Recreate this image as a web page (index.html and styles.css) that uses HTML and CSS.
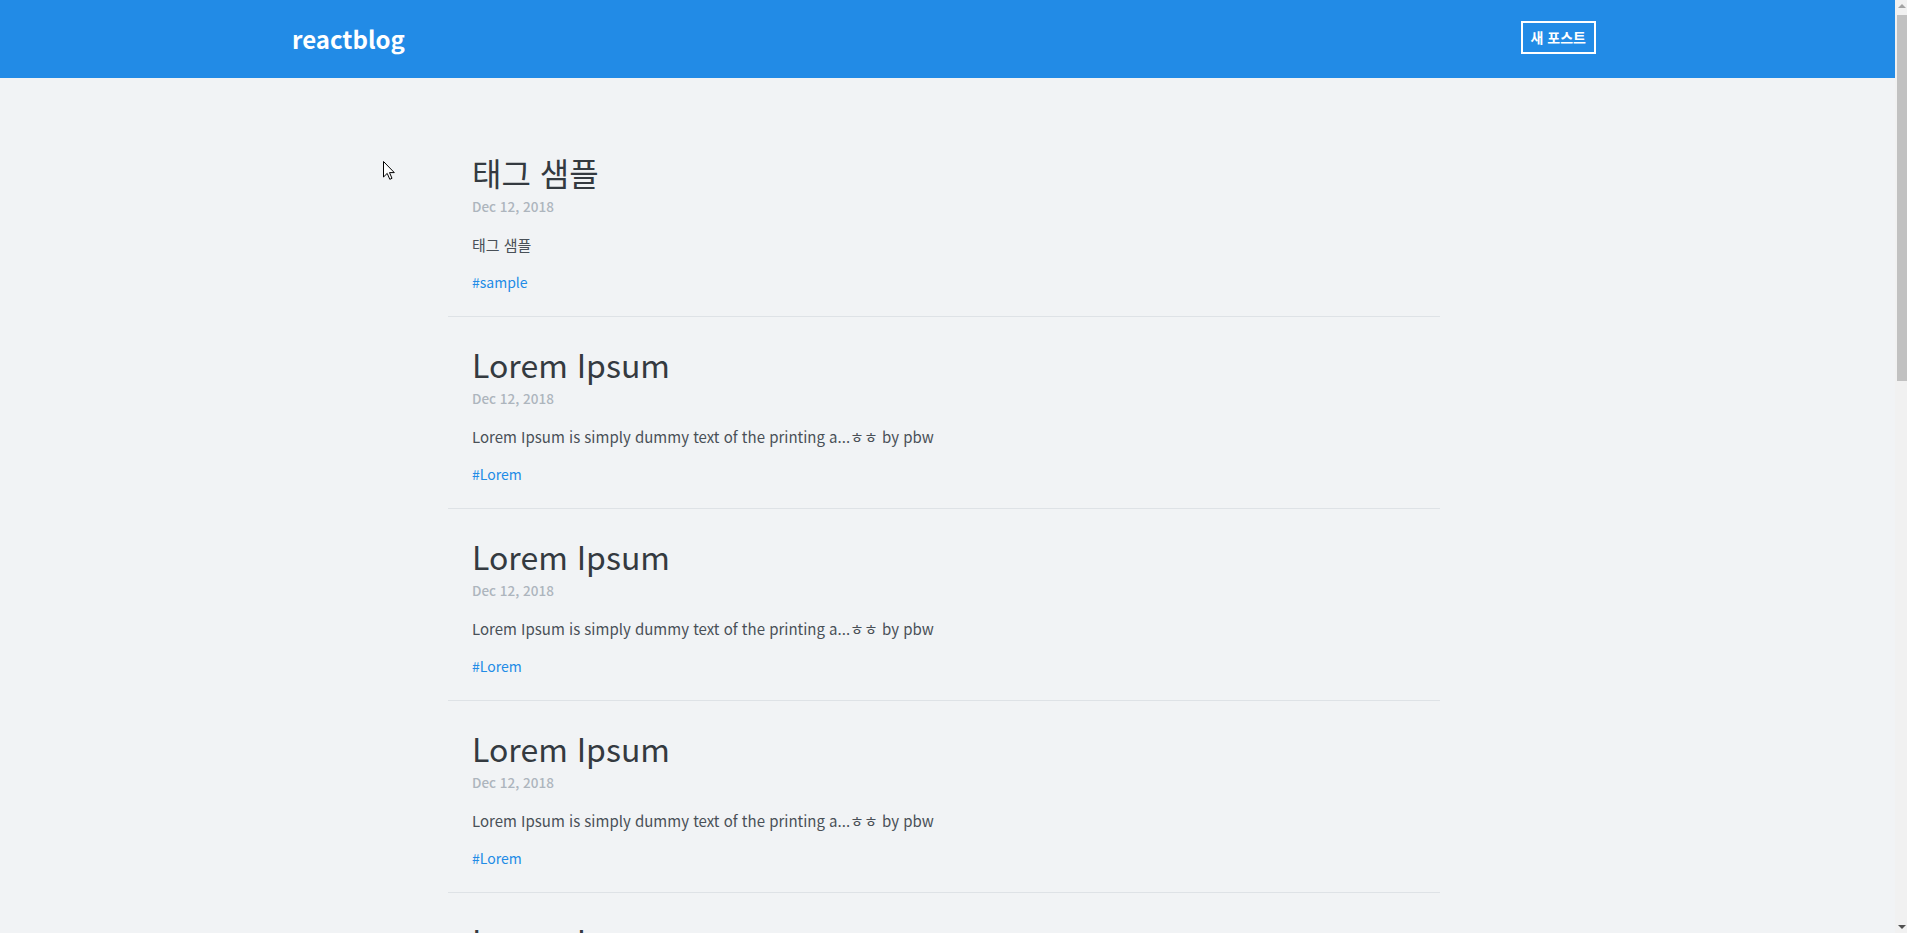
FILE: index.html
```html
<!DOCTYPE html>
<html lang="ko">
<head>
<meta charset="utf-8">
<title>reactblog</title>
<link rel="stylesheet" href="styles.css">
</head>
<body>
<header class="header">
  <div class="header-inner">
    <a class="logo" href="#">reactblog</a>
    <a class="btn-new" href="#">새 포스트</a>
  </div>
</header>
<main class="page">
  <div class="post-list">
    <article class="post-item">
      <h2 class="post-title">태그 샘플</h2>
      <div class="post-date">Dec 12, 2018</div>
      <p class="post-body">태그 샘플</p>
      <div class="post-tags"><a href="#">#sample</a></div>
    </article>
    <article class="post-item">
      <h2 class="post-title">Lorem Ipsum</h2>
      <div class="post-date">Dec 12, 2018</div>
      <p class="post-body">Lorem Ipsum is simply dummy text of the printing a...ㅎㅎ by pbw</p>
      <div class="post-tags"><a href="#">#Lorem</a></div>
    </article>
    <article class="post-item">
      <h2 class="post-title">Lorem Ipsum</h2>
      <div class="post-date">Dec 12, 2018</div>
      <p class="post-body">Lorem Ipsum is simply dummy text of the printing a...ㅎㅎ by pbw</p>
      <div class="post-tags"><a href="#">#Lorem</a></div>
    </article>
    <article class="post-item">
      <h2 class="post-title">Lorem Ipsum</h2>
      <div class="post-date">Dec 12, 2018</div>
      <p class="post-body">Lorem Ipsum is simply dummy text of the printing a...ㅎㅎ by pbw</p>
      <div class="post-tags"><a href="#">#Lorem</a></div>
    </article>
    <article class="post-item">
      <h2 class="post-title">Lorem Ipsum</h2>
      <div class="post-date">Dec 12, 2018</div>
      <p class="post-body">Lorem Ipsum is simply dummy text of the printing a...ㅎㅎ by pbw</p>
      <div class="post-tags"><a href="#">#Lorem</a></div>
    </article>
    <article class="post-item">
      <h2 class="post-title">Lorem Ipsum</h2>
      <div class="post-date">Dec 12, 2018</div>
      <p class="post-body">Lorem Ipsum is simply dummy text of the printing a...ㅎㅎ by pbw</p>
      <div class="post-tags"><a href="#">#Lorem</a></div>
    </article>
  </div>
</main>
<div class="scrollbar" aria-hidden="true">
  <span class="sb-arrow sb-up"></span>
  <span class="sb-thumb"></span>
  <span class="sb-arrow sb-down"></span>
</div>
<svg class="cursor" width="12" height="19" viewBox="0 0 12 19" aria-hidden="true">
  <path d="M0.5 0.5 L0.5 16 L4.2 12.4 L6.8 18.3 L9 17.3 L6.5 11.6 L11.3 11.6 Z" fill="#fff" stroke="#000" stroke-width="1" stroke-linejoin="miter"/>
</svg>
</body>
</html>
```
FILE: styles.css
```css
html, body {
  margin: 0;
  padding: 0;
}
body {
  background: #f1f3f5;
  font-family: "Noto Sans CJK KR", "Noto Sans", sans-serif;
  color: #343a40;
}
a {
  text-decoration: none;
  color: inherit;
}
.header {
  background: #228be6;
  height: 78px;
  padding-right: 19px;
}
.header-inner {
  width: 1304px;
  height: 100%;
  margin: 0 auto;
  display: flex;
  align-items: center;
  justify-content: space-between;
}
.logo {
  color: #fff;
  font-size: 24px;
  font-weight: 700;
  line-height: 1;
  margin-top: -1px;
}
.btn-new {
  color: #fff;
  font-size: 14px;
  font-weight: 700;
  line-height: 21px;
  padding: 4px 8px;
  border: 2px solid #fff;
  margin-bottom: 3px;
}
.page {
  padding-right: 19px;
}
.post-list {
  width: 992px;
  margin: 0 auto;
  padding-top: 47px;
}
.post-item {
  padding: 0 24px;
  height: 191px;
  border-bottom: 1px solid #dee2e6;
  display: flex;
  flex-direction: column;
}
.post-title {
  margin: 25px 0 0;
  font-size: 32px;
  font-weight: 400;
  line-height: 44px;
  color: #343a40;
}
.post-date {
  margin-top: 2px;
  font-size: 13.5px;
  font-weight: 500;
  line-height: 20px;
  color: #adb5bd;
}
.post-body {
  margin: 17px 0 0;
  font-size: 15px;
  line-height: 24px;
  color: #495057;
}
.post-tags {
  margin-top: 15px;
  font-size: 14px;
  line-height: 20px;
  color: #228be6;
}
.scrollbar {
  position: fixed;
  top: 0;
  right: 0;
  width: 12px;
  height: 100%;
  background: #f1f1f1;
}
.sb-thumb {
  position: absolute;
  top: 15px;
  left: 2px;
  right: 0;
  height: 366px;
  background: #c1c1c1;
}
.sb-arrow {
  position: absolute;
  left: 3px;
  width: 0;
  height: 0;
  border-left: 4px solid transparent;
  border-right: 4px solid transparent;
}
.sb-up {
  top: 4px;
  border-bottom: 4px solid #a3a3a3;
}
.sb-down {
  bottom: 4px;
  border-top: 4px solid #505050;
}
.cursor {
  position: absolute;
  left: 383px;
  top: 161px;
}
```
